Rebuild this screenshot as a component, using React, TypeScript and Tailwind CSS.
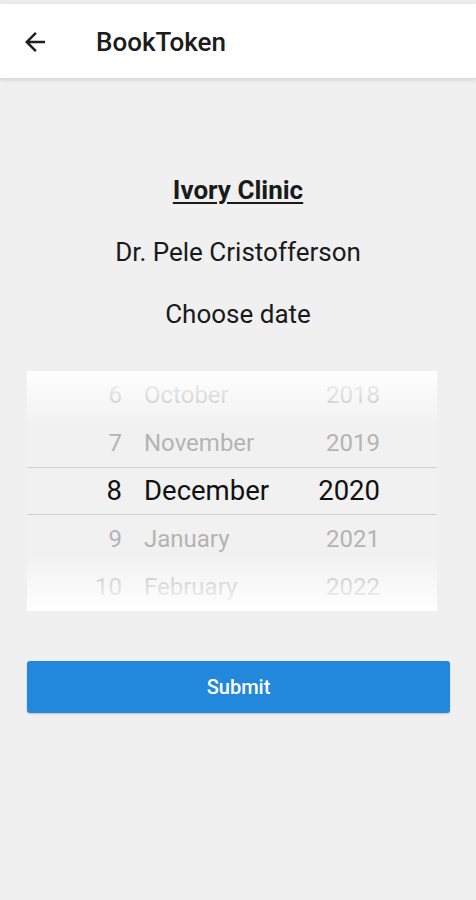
import React from 'react';

const rows = [
  { day: '6', month: 'October', year: '2018' },
  { day: '7', month: 'November', year: '2019' },
  { day: '8', month: 'December', year: '2020', active: true },
  { day: '9', month: 'January', year: '2021' },
  { day: '10', month: 'February', year: '2022' },
];

export default function App() {
  return (
    <div className="min-h-[900px] w-[476px] bg-[#f0f0f0] font-['Roboto',sans-serif] text-[#1a1a1a]">
      <div className="h-[4px] bg-[#ececec]" />
      {/* App bar */}
      <div className="flex h-[74px] items-center bg-white shadow-[0_2px_4px_rgba(0,0,0,0.12)]">
        <svg viewBox="0 0 24 24" className="ml-[20px] mt-[2px] h-[30px] w-[30px] text-[#1e1e1e]" fill="currentColor">
          <path d="M20 11H7.83l5.59-5.59L12 4l-8 8 8 8 1.41-1.41L7.83 13H20v-2z" />
        </svg>
        <span className="ml-[46px] mt-[3px] text-[26px] font-medium text-[#1c1c1c]">BookToken</span>
      </div>

      <div className="flex flex-col items-center pt-[97px]">
        <h1 className="text-[26px] font-bold leading-[30px] underline underline-offset-[3px]">Ivory Clinic</h1>
        <p className="mt-[32px] text-[26px] leading-[30px]">Dr. Pele Cristofferson</p>
        <p className="mt-[32px] text-[26px] leading-[30px]">Choose date</p>
      </div>

      {/* Date picker */}
      <div className="relative mx-[27px] mt-[42px] w-[410px] overflow-hidden bg-[#f1f1f1]">
        <div className="flex flex-col">
          {rows.map((r) => (
            <div
              key={r.day}
              className={`flex h-[48px] items-center ${r.active ? 'border-y border-[#d0d0d0] text-[27.5px] text-[#111]' : 'text-[24px] text-[#b4b4b4]'}`}
            >
              <span className="w-[95px] text-right">{r.day}</span>
              <span className="ml-[22px] w-[150px]">{r.month}</span>
              <span className="w-[86px] text-right">{r.year}</span>
            </div>
          ))}
        </div>
        <div className="pointer-events-none absolute left-0 right-0 top-0 h-[56px] bg-gradient-to-b from-white to-transparent" />
        <div className="pointer-events-none absolute bottom-0 left-0 right-0 h-[56px] bg-gradient-to-t from-white to-transparent" />
      </div>

      <div className="mx-[27px] mt-[50px]">
        <button className="flex h-[52px] w-[423px] items-center justify-center rounded-[3px] bg-[#2188db] text-[20px] font-medium text-white shadow-[0_1px_2px_rgba(0,0,0,0.2)]">
          Submit
        </button>
      </div>
    </div>
  );
}
